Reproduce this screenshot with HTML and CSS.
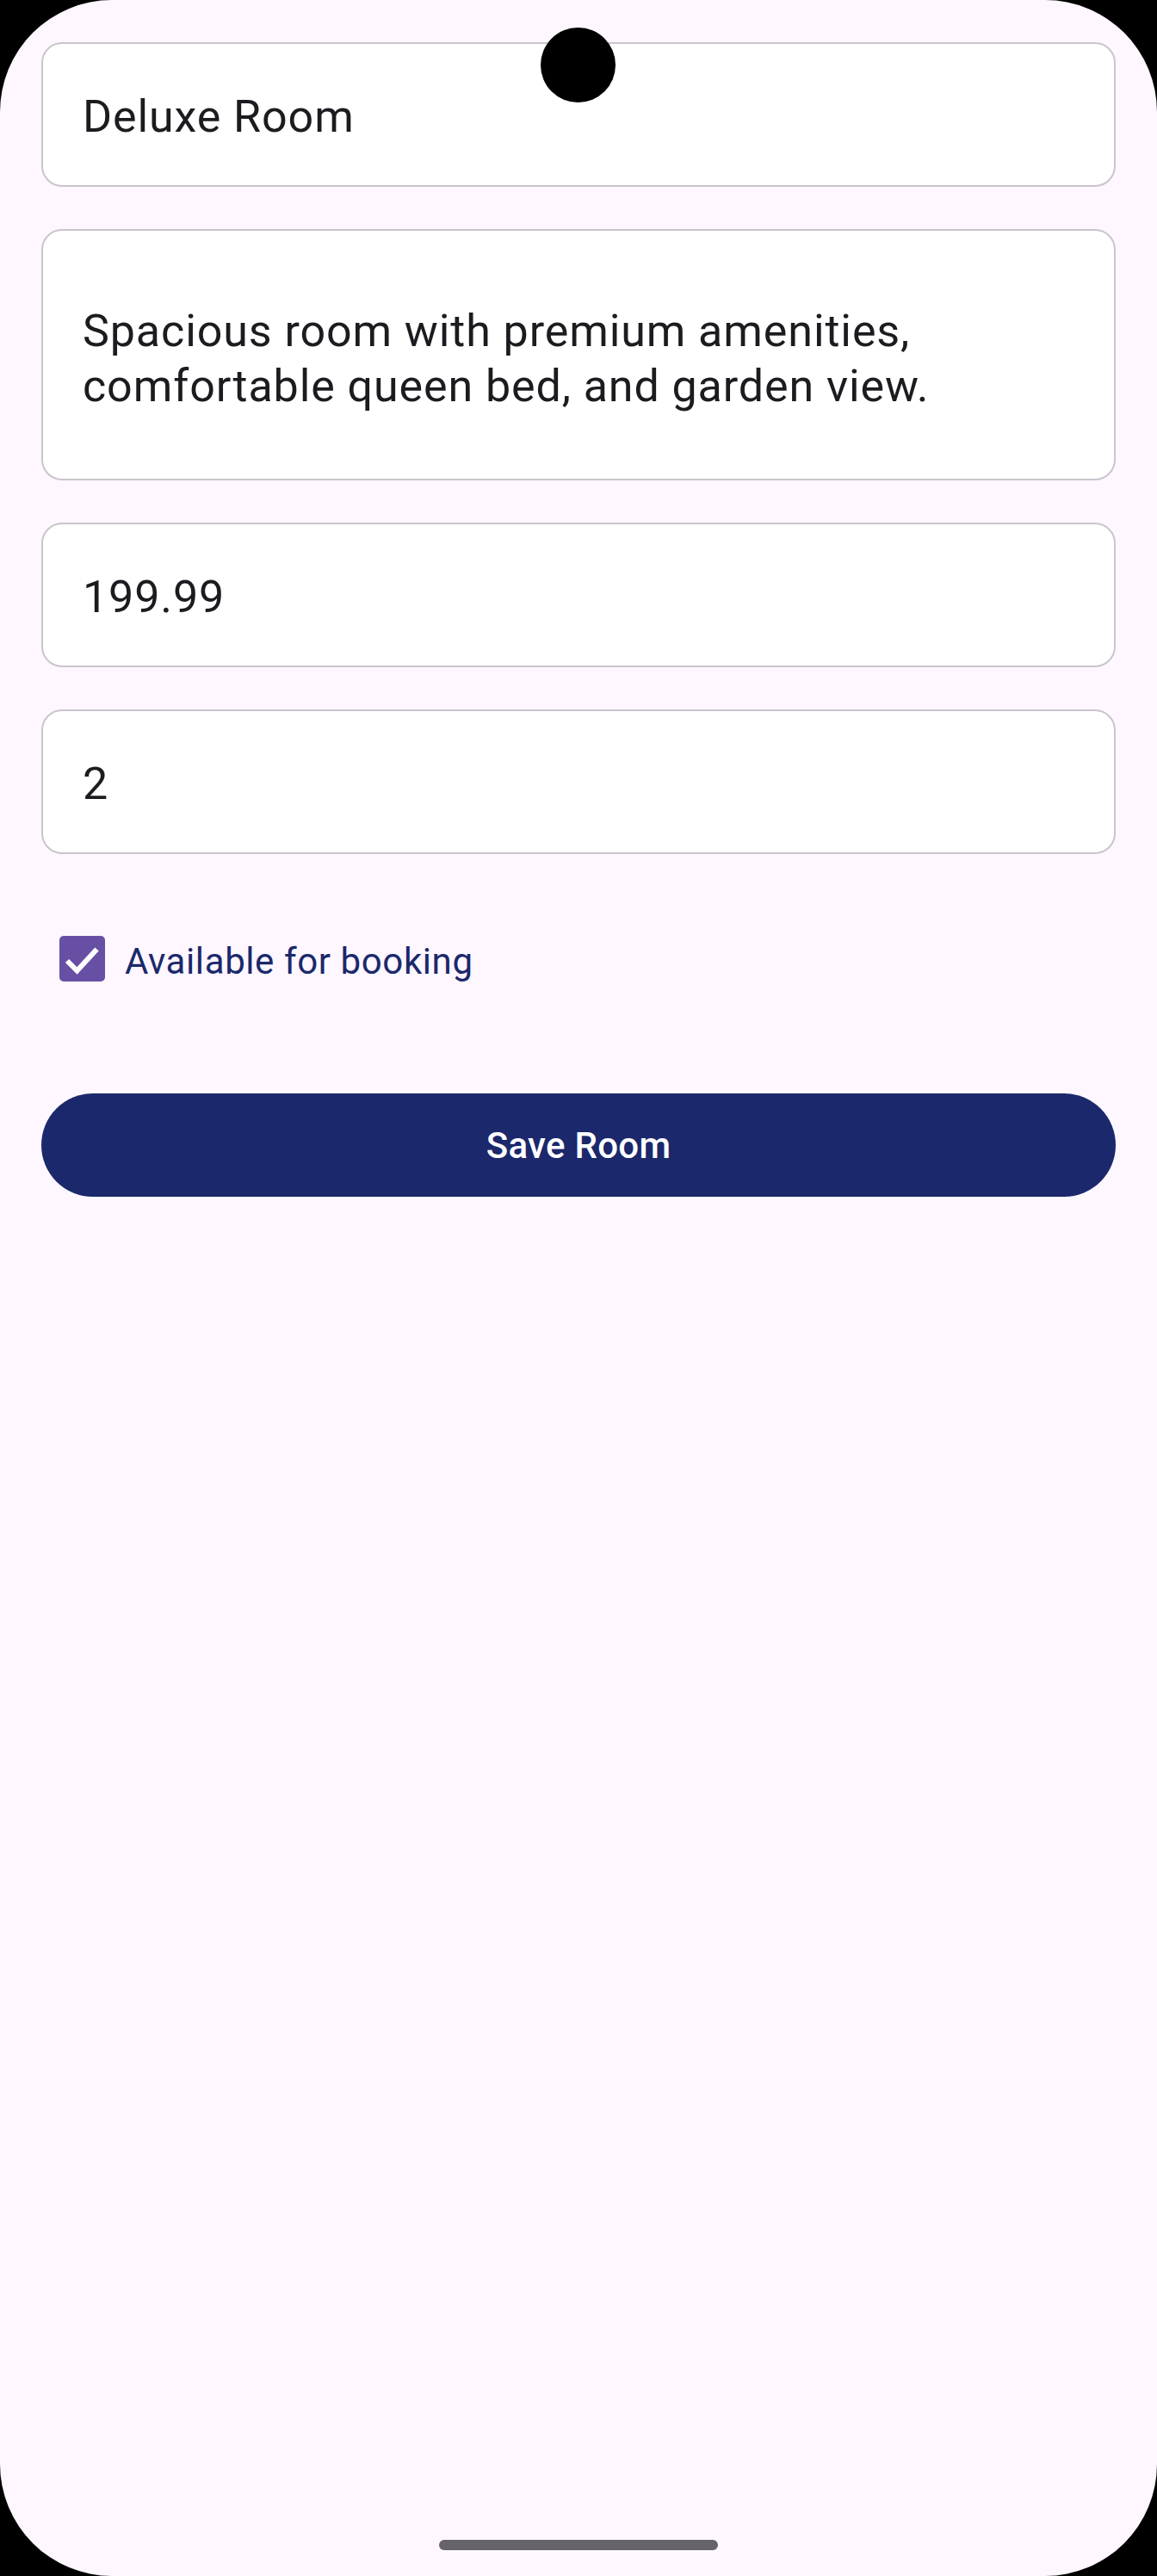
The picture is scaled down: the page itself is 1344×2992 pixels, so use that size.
FILE: index.html
```html
<!DOCTYPE html>
<html lang="en">
<head>
<meta charset="utf-8">
<title>Edit Room</title>
<link rel="stylesheet" href="styles.css">
</head>
<body>
<div class="screen">
  <div class="camera"></div>
  <main class="form">
    <div class="field"><span class="value">Deluxe Room</span></div>
    <div class="field field-multi"><span class="value">Spacious room with premium amenities, comfortable queen bed, and garden view.</span></div>
    <div class="field"><span class="value">199.99</span></div>
    <div class="field"><span class="value">2</span></div>
    <label class="check-row">
      <span class="checkbox">
        <svg viewBox="0 0 53 53" width="53" height="53" aria-hidden="true">
          <polyline points="9,29 20.5,40.5 43.5,15.5" fill="none" stroke="#ffffff" stroke-width="6" stroke-linejoin="miter"/>
        </svg>
      </span>
      <span class="check-label">Available for booking</span>
    </label>
    <button class="save-btn" type="button">Save Room</button>
  </main>
  <div class="home-indicator"></div>
</div>
</body>
</html>
```
FILE: styles.css
```css
html, body {
  margin: 0;
  padding: 0;
  background: #000000;
}

.screen {
  position: relative;
  width: 1344px;
  height: 2992px;
  background: #fef7ff;
  border-radius: 130px;
  overflow: hidden;
  display: flex;
  flex-direction: column;
  font-family: Roboto, "Liberation Sans", sans-serif;
}

.camera {
  position: absolute;
  left: 628px;
  top: 32px;
  width: 87px;
  height: 87px;
  border-radius: 50%;
  background: #000000;
  z-index: 2;
}

.form {
  display: flex;
  flex-direction: column;
  gap: 49px;
  padding: 49px 48px 0 48px;
}

.field {
  box-sizing: border-box;
  height: 168px;
  background: #ffffff;
  border: 2px solid #c9c5cb;
  border-radius: 24px;
  padding: 53px 46px 0 46px;
  color: #1d1b20;
  font-size: 52px;
  line-height: 64px;
  letter-spacing: 0.9px;
}

.field-multi {
  height: 292px;
  padding-top: 85px;
}

.value {
  display: block;
}

.check-row {
  display: flex;
  align-items: center;
  margin-top: 46px;
  padding-left: 21px;
  height: 53px;
}

.checkbox {
  width: 53px;
  height: 53px;
  border-radius: 5px;
  background: #6750a4;
  display: flex;
  flex-shrink: 0;
}

.check-label {
  margin-left: 23px;
  padding-top: 6px;
  font-size: 42px;
  line-height: 60px;
  color: #1b286b;
  letter-spacing: 0.6px;
}

.save-btn {
  margin-top: 81px;
  height: 120px;
  border: none;
  border-radius: 60px;
  background: #1b286b;
  color: #ffffff;
  font-family: Roboto, "Liberation Sans", sans-serif;
  font-weight: 500;
  font-size: 42px;
  letter-spacing: 0.3px;
  padding: 0;
}

.home-indicator {
  margin: auto auto 30px auto;
  width: 324px;
  height: 12px;
  border-radius: 6px;
  background: #666468;
}
```
